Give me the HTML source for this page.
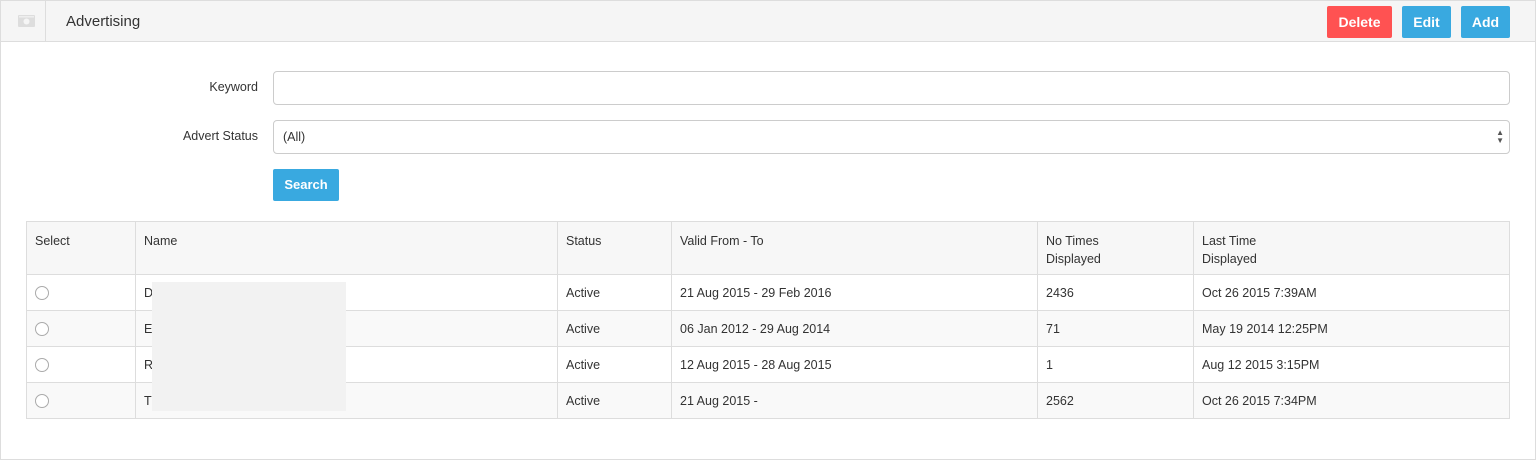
<!DOCTYPE html>
<html><head><style>
*{box-sizing:border-box;margin:0;padding:0}
body{width:1536px;height:460px;background:#fff;font-family:"Liberation Sans",sans-serif;font-size:12.5px;color:#333;position:relative;overflow:hidden}
.frame{position:absolute;left:0;top:0;width:1536px;height:460px;border:1px solid #ddd}
.hdr{position:absolute;left:1px;top:1px;width:1534px;height:41px;background:#f5f5f5;border-bottom:1px solid #ddd}
.ic{position:absolute;left:0;top:0;width:45px;height:40px;border-right:1px solid #ddd}
.title{position:absolute;left:65px;top:12px;font-size:15px;color:#333}
.btn{position:absolute;top:6px;height:32px;color:#fff;font-weight:bold;font-size:14px;border-radius:2px;text-align:center;line-height:32px}
.lbl{position:absolute;right:1278px;font-size:12.5px}
.inp{position:absolute;left:273px;width:1237px;height:34px;border:1px solid #ccc;border-radius:4px}
table{position:absolute;left:26px;top:221px;border-collapse:collapse;width:1484px}
td{border:1px solid #ddd;padding:0 8px;height:36px;vertical-align:middle}
tr.h td{height:53px;background:#f7f7f7;vertical-align:top;padding-top:10px;line-height:18px}
tr.s td{background:#f9f9f9}
.r{display:inline-block;width:14px;height:14px;border:1px solid #aaa;border-radius:50%;background:#fff;margin-top:4px}
</style></head><body>
<div class="frame"></div>
<div class="hdr">
 <div class="ic"><svg width="45" height="40"><rect x="17" y="14" width="17" height="12" rx="1" fill="#ddd"/><circle cx="25.5" cy="20.5" r="3" fill="#f5f5f5"/><rect x="18" y="15" width="15" height="1.5" fill="#eee"/></svg></div>
 <div class="title">Advertising</div>
</div>
<div class="btn" style="left:1327px;width:65px;background:#ff5252">Delete</div>
<div class="btn" style="left:1402px;width:49px;background:#39a9e0">Edit</div>
<div class="btn" style="left:1461px;width:49px;background:#39a9e0">Add</div>
<div class="lbl" style="top:80px">Keyword</div>
<div class="inp" style="top:71px"></div>
<div class="lbl" style="top:129px">Advert Status</div>
<div class="inp" style="top:120px;padding:9px 9px">(All)<span style="position:absolute;right:5px;top:8px;font-size:8px;line-height:8px;color:#555">▲<br>▼</span></div>
<div style="position:absolute;left:273px;top:169px;width:66px;height:32px;background:#39a9e0;color:#fff;font-weight:bold;font-size:13px;text-align:center;line-height:32px;border-radius:2px">Search</div>
<table>
<tr class="h"><td style="width:109px">Select</td><td style="width:422px">Name</td><td style="width:114px">Status</td><td style="width:366px">Valid From - To</td><td style="width:156px">No Times<br>Displayed</td><td>Last Time<br>Displayed</td></tr>
<tr><td><span class="r"></span></td><td>D</td><td>Active</td><td>21 Aug 2015 - 29 Feb 2016</td><td>2436</td><td>Oct 26 2015 7:39AM</td></tr>
<tr class="s"><td><span class="r"></span></td><td>E</td><td>Active</td><td>06 Jan 2012 - 29 Aug 2014</td><td>71</td><td>May 19 2014 12:25PM</td></tr>
<tr><td><span class="r"></span></td><td>R</td><td>Active</td><td>12 Aug 2015 - 28 Aug 2015</td><td>1</td><td>Aug 12 2015 3:15PM</td></tr>
<tr class="s"><td><span class="r"></span></td><td>T</td><td>Active</td><td>21 Aug 2015 -</td><td>2562</td><td>Oct 26 2015 7:34PM</td></tr>
</table>
<div style="position:absolute;left:152px;top:282px;width:194px;height:129px;background:#f2f2f2"></div>
</body></html>
